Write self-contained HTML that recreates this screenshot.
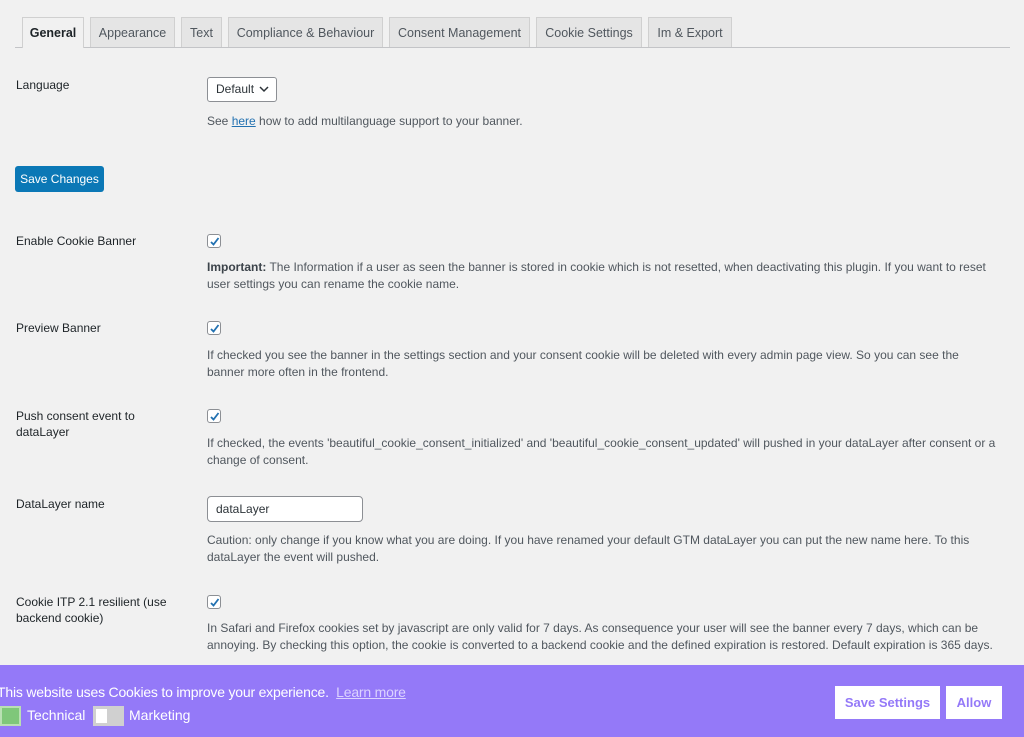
<!DOCTYPE html>
<html><head><style>
*{margin:0;padding:0;box-sizing:border-box}
body{width:1024px;height:737px;background:#f1f1f1;font-family:"Liberation Sans",sans-serif;font-size:12px;color:#3c434a;position:relative;overflow:hidden}
.a{position:absolute;white-space:nowrap}
.tab{position:absolute;top:17px;height:30px;background:#e5e5e5;border:1px solid #d0d0d0;border-bottom:none;font-size:12.5px;color:#50575e;text-align:center;line-height:30px}
.lbl{position:absolute;left:16px;font-size:12px;color:#1d2327;line-height:16px}
.d{position:absolute;left:207px;font-size:12px;color:#50575e;line-height:17px}
.cb{position:absolute;left:207px;width:14px;height:14px;border:1px solid #8c8f94;border-radius:3px;background:#fff}
.cb svg{position:absolute;left:1px;top:1px}
</style></head><body>
<div class="a" style="left:15px;top:47px;width:995px;height:1px;background:#c3c4c7"></div>
<div class="tab" style="left:22px;width:62px;background:#f1f1f1;height:31px;color:#1d2327;font-weight:bold">General</div>
<div class="tab" style="left:90px;width:85px">Appearance</div>
<div class="tab" style="left:181px;width:41px">Text</div>
<div class="tab" style="left:228px;width:155px">Compliance &amp; Behaviour</div>
<div class="tab" style="left:389px;width:141px">Consent Management</div>
<div class="tab" style="left:536px;width:106px">Cookie Settings</div>
<div class="tab" style="left:648px;width:84px">Im &amp; Export</div>

<div class="lbl" style="top:77px">Language</div>
<div class="a" style="left:207px;top:77px;width:70px;height:25px;border:1px solid #8c8f94;border-radius:3px;background:#fff;line-height:23px;padding-left:8px;color:#2c3338">Default <svg width="10" height="8" style="margin-left:2px"><path d="M1 2l4 4 4-4" stroke="#2c3338" stroke-width="1.5" fill="none"/></svg></div>
<div class="d" style="top:113px">See <span style="color:#2271b1;text-decoration:underline">here</span> how to add multilanguage support to your banner.</div>
<div class="a" style="left:15px;top:166px;width:89px;height:26px;background:#0b78b6;border-radius:3px;color:#fff;line-height:26px;text-align:center;font-size:12px">Save Changes</div>

<div class="lbl" style="top:233px">Enable Cookie Banner</div>
<div class="cb" style="top:234px"><svg width="11" height="11"><path d="M2 6l2.5 2.5L9.5 2" stroke="#2271b1" stroke-width="1.8" fill="none"/></svg></div>
<div class="d" style="top:259px"><b style="color:#3c434a">Important:</b> The Information if a user as seen the banner is stored in cookie which is not resetted, when deactivating this plugin. If you want to reset<br>user settings you can rename the cookie name.</div>

<div class="lbl" style="top:320px">Preview Banner</div>
<div class="cb" style="top:321px"><svg width="11" height="11"><path d="M2 6l2.5 2.5L9.5 2" stroke="#2271b1" stroke-width="1.8" fill="none"/></svg></div>
<div class="d" style="top:347px">If checked you see the banner in the settings section and your consent cookie will be deleted with every admin page view. So you can see the<br>banner more often in the frontend.</div>

<div class="lbl" style="top:408px">Push consent event to<br>dataLayer</div>
<div class="cb" style="top:409px"><svg width="11" height="11"><path d="M2 6l2.5 2.5L9.5 2" stroke="#2271b1" stroke-width="1.8" fill="none"/></svg></div>
<div class="d" style="top:435px">If checked, the events 'beautiful_cookie_consent_initialized' and 'beautiful_cookie_consent_updated' will pushed in your dataLayer after consent or a<br>change of consent.</div>

<div class="lbl" style="top:496px">DataLayer name</div>
<div class="a" style="left:207px;top:496px;width:156px;height:26px;border:1px solid #8c8f94;border-radius:4px;background:#fff;line-height:24px;padding-left:8px;color:#2c3338">dataLayer</div>
<div class="d" style="top:532px">Caution: only change if you know what you are doing. If you have renamed your default GTM dataLayer you can put the new name here. To this<br>dataLayer the event will pushed.</div>

<div class="lbl" style="top:594px">Cookie ITP 2.1 resilient (use<br>backend cookie)</div>
<div class="cb" style="top:595px"><svg width="11" height="11"><path d="M2 6l2.5 2.5L9.5 2" stroke="#2271b1" stroke-width="1.8" fill="none"/></svg></div>
<div class="d" style="top:620px">In Safari and Firefox cookies set by javascript are only valid for 7 days. As consequence your user will see the banner every 7 days, which can be<br>annoying. By checking this option, the cookie is converted to a backend cookie and the defined expiration is restored. Default expiration is 365 days.</div>

<div class="a" style="left:0;top:665px;width:1024px;height:72px;background:#9479f8"></div>
<div class="a" style="left:-3px;top:684px;color:#fff;font-size:14px;letter-spacing:-0.2px">This website uses Cookies to improve your experience. &nbsp;<span style="text-decoration:underline;color:#dcd3ff">Learn more</span></div>
<div class="a" style="left:0;top:706px;width:21px;height:20px;background:#7fc77a;border:2px solid #b9e0b3"></div>
<div class="a" style="left:27px;top:707px;color:#fff;font-size:14px">Technical</div>
<div class="a" style="left:93px;top:706px;width:31px;height:20px;background:#d0d0d0"><div style="position:absolute;left:3px;top:3px;width:11px;height:14px;background:#fff"></div></div>
<div class="a" style="left:129px;top:707px;color:#fff;font-size:14px">Marketing</div>
<div class="a" style="left:835px;top:686px;width:105px;height:33px;background:#fff;color:#9479f8;font-weight:bold;text-align:center;line-height:33px;font-size:13px">Save Settings</div>
<div class="a" style="left:946px;top:686px;width:56px;height:33px;background:#fff;color:#9479f8;font-weight:bold;text-align:center;line-height:33px;font-size:13px">Allow</div>
</body></html>
